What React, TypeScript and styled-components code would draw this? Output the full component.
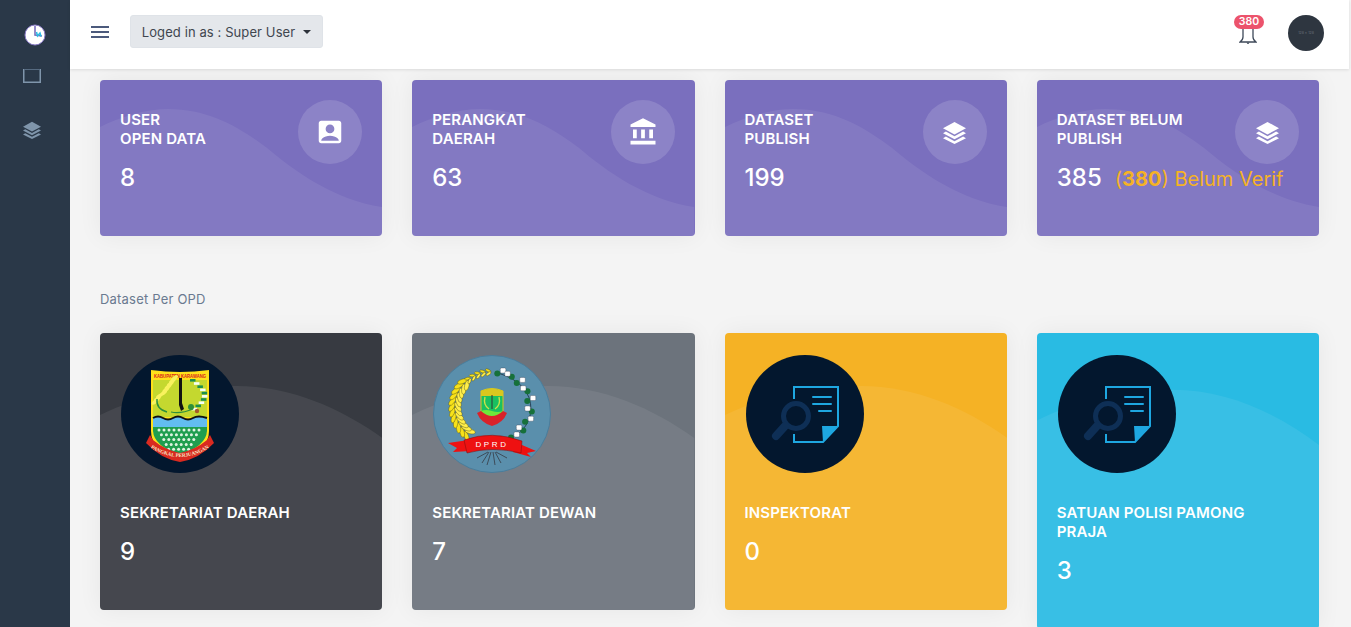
import styled, { createGlobalStyle } from "styled-components";
import { ReactNode } from "react";
import { MdAccountBox, MdAccountBalance } from "react-icons/md";

const GlobalStyle = createGlobalStyle`
  html, body {
    margin: 0;
    height: 100%;
    overflow: hidden;
    background: #f4f4f4;
  }
  body {
    font-family: "Inter", "Open Sans", sans-serif;
    color: #333;
  }
`;

const Shell = styled.div`
  display: flex;
  width: 1351px;
  height: 627px;
  overflow: hidden;
`;

const Sidebar = styled.aside`
  flex: 0 0 70px;
  background: #2a3848;
  display: flex;
  flex-direction: column;
  align-items: center;
`;

const SideLogo = styled.div`
  height: 69px;
  display: flex;
  align-items: center;
  justify-content: center;
`;

const SideNav = styled.nav`
  display: flex;
  flex-direction: column;
  align-items: center;
  gap: 38px;
  padding-right: 6px;
  color: #7f95ab;
`;

const Main = styled.main`
  flex: 1;
  min-width: 0;
  display: flex;
  flex-direction: column;
`;

const TopBar = styled.header`
  flex: 0 0 69px;
  margin-right: 2px;
  background: #fff;
  box-shadow: 0 1px 3px rgba(0, 0, 0, 0.1);
  display: flex;
  align-items: flex-start;
  padding: 15px 25px 0 21px;
  box-sizing: border-box;
  position: relative;
  z-index: 2;
`;

const MenuButton = styled.div`
  height: 33px;
  display: flex;
  align-items: center;
  margin-right: 21px;
`;

const UserButton = styled.div`
  width: 193px;
  height: 33px;
  box-sizing: border-box;
  background: #e4e7eb;
  border: 1px solid #dfe3e8;
  border-radius: 3px;
  display: flex;
  align-items: center;
  justify-content: center;
  gap: 6px;
  font-size: 13px;
  color: #40464f;
  letter-spacing: 0.1px;
`;

const Caret = styled.span`
  width: 0;
  height: 0;
  border-left: 4px solid transparent;
  border-right: 4px solid transparent;
  border-top: 4px solid #2d323a;
  margin-left: 2px;
`;

const Spacer = styled.div`
  flex: 1;
`;

const BellWrap = styled.div`
  position: relative;
  width: 30px;
  height: 36px;
  margin-right: 24px;
  display: flex;
  justify-content: center;
  padding: 13px 2px 0 0;
  box-sizing: border-box;
`;

const Badge = styled.span`
  position: absolute;
  top: 0;
  left: 0;
  width: 30px;
  height: 14px;
  border-radius: 8px;
  background: #ec536c;
  color: #fff;
  font-size: 10.5px;
  font-weight: 600;
  line-height: 14px;
  text-align: center;
`;

const Avatar = styled.div`
  width: 36px;
  height: 36px;
  border-radius: 50%;
  background: #2e3640;
  color: #6b727c;
  font-size: 3.5px;
  display: flex;
  align-items: center;
  justify-content: center;
`;

const Content = styled.div`
  padding: 11px 32px 0 30px;
`;

const CardGrid = styled.div`
  display: grid;
  grid-template-columns: repeat(4, 1fr);
  gap: 30px;
  align-items: start;
`;

const SectionLabel = styled.div`
  font-size: 13px;
  line-height: 16px;
  letter-spacing: 0.2px;
  color: #6a7a90;
  margin: 55px 0 26px;
`;

const Card = styled.div<{ $base: string }>`
  position: relative;
  overflow: hidden;
  background: ${(p) => p.$base};
  border-radius: 4px;
  box-shadow: 0 0 24px rgba(0, 0, 0, 0.06);
  color: #fff;
  padding: 30px 20px 44px;
`;

const OpdCard = styled(Card)`
  padding-top: 22px;
`;

const WaveSvg = styled.svg`
  position: absolute;
  inset: 0;
  width: 100%;
  height: 100%;
`;

const CardBody = styled.div`
  position: relative;
`;

const CardTitle = styled.div`
  font-size: 15px;
  line-height: 19px;
  font-weight: 600;
  letter-spacing: 0.15px;
  margin-bottom: 15px;
`;

const OpdTitle = styled(CardTitle)`
  padding-right: 30px;
`;

const CardValue = styled.div`
  font-size: 24px;
  height: 29px;
  line-height: 29px;
  font-weight: 500;
  white-space: nowrap;
`;

const PendingNote = styled.span`
  margin-left: 13px;
  font-size: 20px;
  line-height: 1;
  font-weight: 400;
  color: #f5b225;
  strong {
    font-weight: 700;
  }
`;

const IconCircle = styled.div`
  position: absolute;
  top: 20px;
  right: 20px;
  width: 64px;
  height: 64px;
  border-radius: 50%;
  background: rgba(255, 255, 255, 0.14);
  display: flex;
  align-items: center;
  justify-content: center;
`;

const LogoBox = styled.div`
  width: 118px;
  height: 118px;
  margin: 0 0 30px 1px;
  svg {
    display: block;
  }
`;

const PURPLE_WAVE = "M0,47 C20,37 45,29 68,29 C110,29 140,48 167,68 C195,92 235,120 282,127 L282,156 L0,156 Z";
const OPD_WAVE = "M0,82 C40,62 90,53 136,53 C190,53 240,75 282,105 L282,277 L0,277 Z";

const Wave = ({ d, h }: { d: string; h: number }) => (
  <WaveSvg viewBox={`0 0 282 ${h}`} preserveAspectRatio="none">
    <path d={d} fill="rgba(255,255,255,0.07)" />
  </WaveSvg>
);

const HamburgerIcon = () => (
  <svg width="18" height="12" viewBox="0 0 18 12" style={{ display: "block" }}>
    <path d="M0 1 H18 M0 6 H18 M0 11 H18" stroke="#4c5a7c" strokeWidth="2" />
  </svg>
);

const BellIcon = () => (
  <svg width="18" height="18" viewBox="0 0 18 18" style={{ display: "block" }}>
    <path d="M4 0 V9 Q4 12 1 14 H17 Q14 12 14 9 V0" fill="none" stroke="#3f4a5a" strokeWidth="1.3" />
    <path d="M7.5 14.5 Q9 17.5 10.5 14.5 Z" fill="#3f4a5a" />
  </svg>
);

const LayersIcon = ({ size = 23, color = "#fff" }: { size?: number; color?: string }) => (
  <svg width={size} height={size} viewBox="0 0 24 24">
    <path d="M12 1 L24 7.5 L12 14 L0 7.5 Z" fill={color} />
    <path d="M3 11 L12 16 L21 11 L24 12.8 L12 19 L0 12.8 Z" fill={color} />
    <path d="M3 16.3 L12 21 L21 16.3 L24 18 L12 24 L0 18 Z" fill={color} />
  </svg>
);

const PieLogo = () => (
  <svg width="24" height="24" viewBox="0 0 24 24">
    <circle cx="12" cy="12" r="10" fill="#fff" stroke="#8a7cc8" strokeWidth="1" />
    <path d="M12 3 L12 12 L19 13" fill="none" stroke="#7a6fbe" strokeWidth="1.6" />
    <path d="M13.5 9 L14.5 13 L17 10 L18 13.5" fill="none" stroke="#29bbe3" strokeWidth="1.5" />
  </svg>
);

const ClippedBoxIcon = () => (
  <svg width="18" height="14" viewBox="0 0 18 14" style={{ display: "block" }}>
    <path d="M0.75 0 V13.25 H17.25 V0" fill="none" stroke="#7f95ab" strokeWidth="1.5" />
    <path d="M1 0.5 H17" stroke="#566a80" strokeWidth="1" />
  </svg>
);

const KarawangLogo = () => {
  const dots = [];
  for (let row = 0; row < 5; row++) {
    for (let col = 0; col < 9 - row; col++) {
      dots.push(<circle key={`${row}-${col}`} cx={38 + row * 2.4 + col * 5} cy={75 + row * 4.8} r="1.5" fill="#dff3e2" />);
    }
  }
  const grains = [];
  for (let i = 0; i < 9; i++) {
    const cx = 36 + i * 2.2 - (i < 3 ? 2 : 0);
    const cy = 47 - i * 3;
    grains.push(<ellipse key={i} cx={cx} cy={cy} rx="4" ry="1.7" fill="#f8f25e" transform={`rotate(-35 ${cx} ${cy})`} />);
  }
  const leaves = [];
  for (let i = 0; i < 10; i++) {
    const y = 24 + i * 3.2;
    const x = 69 + Math.sin(i / 3) * 12;
    leaves.push(<rect key={i} x={x} y={y} width="5.5" height="2.6" fill={i % 2 ? "#f4fff6" : "#1b8f4f"} />);
  }
  return (
    <svg width="118" height="118" viewBox="0 0 118 118">
      <circle cx="59" cy="59" r="59" fill="#03172e" />
      <path d="M30 15 Q59 19 88 15 V76 Q88 96 59 105 Q30 96 30 76 Z" fill="#ffe11a" />
      <path d="M32 25 H86 V62 H32 Z" fill="#c4d82f" />
      <text
        fontFamily="Liberation Sans, sans-serif"
        fontSize="5"
        fontWeight="700"
        fill="#d8231f"
        x="33"
        y="22.5"
        textLength="52"
        lengthAdjust="spacingAndGlyphs"
      >
        KABUPATEN KARAWANG
      </text>
      <path d="M32 71 V76 Q33 91 59 100 Q85 91 86 76 V71 Z" fill="#1f9e4f" />
      {dots}
      <path d="M32 63 Q37 60 42 63 T52 63 T62 63 T72 63 T86 63 V72 H32 Z" fill="#62bdf0" />
      <path d="M32 63 Q37 60 42 63 T52 63 T62 63 T72 63 T86 63" fill="none" stroke="#111" strokeWidth="2" />
      {grains}
      <path d="M36 44 Q35 54 46 57" fill="none" stroke="#2e8f3a" strokeWidth="1.4" />
      <path d="M58 23 H61 V48 L63 54 L60 56 L58 50 Z" fill="#111" />
      {leaves}
      <circle cx="70" cy="52" r="3" fill="#2e8f3a" />
      <circle cx="76" cy="56" r="2.2" fill="#a35a2a" />
      <path d="M50 57 Q60 59 72 54" fill="none" stroke="#2e8f3a" strokeWidth="1.2" />
      <path d="M25 88 L29 80 L32 85 Q44 95 59 98 Q74 95 86 85 L89 80 L93 88 Q78 104 59 107 Q40 104 25 88 Z" fill="#d92a20" />
      <path id="kr-ribbon" d="M27 91 Q59 113 91 91" fill="none" />
      <text fontFamily="Liberation Serif, serif" fontSize="5.2" fontWeight="700" fill="#f6e9c8">
        <textPath href="#kr-ribbon" startOffset="50%" textAnchor="middle">
          PANGKAL PERJUANGAN
        </textPath>
      </text>
    </svg>
  );
};

const DprdLogo = () => {
  const wheat = [];
  for (let i = 0; i < 17; i++) {
    const deg = 130 + i * 8.4;
    const a = (deg * Math.PI) / 180;
    const small = i > 11;
    const rx = small ? 3 : 5.2;
    const ry = small ? 1.3 : 2.2;
    const spread = small ? 1.6 : 3;
    const ox = 59 + Math.cos(a) * (37 + spread);
    const oy = 52 + Math.sin(a) * (35 + spread);
    const ix = 59 + Math.cos(a) * (37 - spread);
    const iy = 52 + Math.sin(a) * (35 - spread);
    wheat.push(<ellipse key={`o${i}`} cx={ox} cy={oy} rx={rx} ry={ry} fill="#f7e21a" stroke="#4d4a10" strokeWidth="0.4" transform={`rotate(${deg + 90 + 30} ${ox} ${oy})`} />);
    wheat.push(<ellipse key={`i${i}`} cx={ix} cy={iy} rx={rx} ry={ry} fill="#ffef4a" stroke="#4d4a10" strokeWidth="0.4" transform={`rotate(${deg + 90 - 30} ${ix} ${iy})`} />);
  }
  const cotton = [];
  for (let i = 0; i < 10; i++) {
    const a = -1.4 + i * 0.3;
    const x = 60 + Math.cos(a) * 37;
    const y = 52 + Math.sin(a) * 35;
    cotton.push(<circle key={i} cx={x + (i % 2 ? 2 : -2)} cy={y + 1} r="3" fill="#16703a" />);
    cotton.push(<rect key={`c${i}`} x={x - (i % 2 ? 5 : -1)} y={y - 4.5} width="5.5" height="5" rx="1.2" fill="#fff" stroke="#223" strokeWidth="0.3" />);
  }
  return (
    <svg width="118" height="118" viewBox="0 0 118 118">
      <circle cx="59" cy="59" r="58.5" fill="#5a8fac" stroke="#4a7d9b" />
      {wheat}
      <path d="M65 18 Q98 28 98 55 Q97 70 84 80" fill="none" stroke="#123" strokeWidth="0.7" />
      {cotton}
      <path d="M48 36 Q59 31 70 36 V56 Q70 64 59 68 Q48 64 48 56 Z" fill="#19c060" stroke="#d9c71e" strokeWidth="1" />
      <path d="M48 36 Q59 31 70 36 V41 H48 Z" fill="#d9c71e" />
      <path d="M59 40 V54" stroke="#333" strokeWidth="1" />
      <path d="M52 42 Q50 50 56 54 M66 42 Q68 50 62 54" fill="none" stroke="#c9e24a" strokeWidth="1.4" />
      <path d="M48 56 Q53 54 59 56 T70 56 V58 Q66 65 59 68 Q52 65 48 58 Z" fill="#6ee83a" />
      <path d="M44 58 L48 56 Q59 66 70 56 L74 58 Q70 68 59 71 Q48 68 44 58 Z" fill="#d9222a" />
      <path d="M15 88 L36 85 L38 96 L20 97 L24 93 Z" fill="#ee1111" />
      <path d="M103 96 L82 87 L80 97 L98 102 L94 98 Z" fill="#ee1111" />
      <path d="M31 85 Q59 75 89 86 L88 98 Q59 91 34 98 Z" fill="#ee1111" stroke="#7a1010" strokeWidth="0.5" />
      <text x="59" y="92" fontFamily="Liberation Sans, sans-serif" fontSize="8" fill="#fff" letterSpacing="2.6" textAnchor="middle">
        DPRD
      </text>
      <path d="M55 97 L44 103 M56 97 L49 108 M58 97 L54 110 M60 97 L62 110 M62 97 L68 108 M63 97 L74 103" stroke="#3d4c5a" strokeWidth="1" fill="none" />
    </svg>
  );
};

const DocSearchLogo = () => (
  <svg width="118" height="118" viewBox="0 0 118 118">
    <circle cx="59" cy="59" r="59" fill="#03172e" />
    <path d="M48 44 V32 H92 V71 L77 87 H48 V79" fill="none" stroke="#1ea7e1" strokeWidth="2" />
    <path d="M92 71 L77 87 L76 71 Z" fill="#1ea7e1" />
    <path d="M67 42 H85 M67 49 H85 M73 56 H85" stroke="#1ea7e1" strokeWidth="2" strokeLinecap="round" />
    <circle cx="50" cy="61" r="12.5" fill="none" stroke="#0e2f56" strokeWidth="5" />
    <path d="M39 71 L30 81" stroke="#0e2f56" strokeWidth="8" strokeLinecap="round" />
  </svg>
);

type Stat = { title: ReactNode; value: ReactNode; icon: ReactNode };

const stats: Stat[] = [
  { title: <>USER<br />OPEN DATA</>, value: "8", icon: <MdAccountBox size={30} color="#fff" /> },
  { title: <>PERANGKAT<br />DAERAH</>, value: "63", icon: <MdAccountBalance size={30} color="#fff" /> },
  { title: <>DATASET<br />PUBLISH</>, value: "199", icon: <LayersIcon /> },
  {
    title: <>DATASET BELUM<br />PUBLISH</>,
    value: (
      <>
        385
        <PendingNote>
          (<strong>380</strong>) Belum Verif
        </PendingNote>
      </>
    ),
    icon: <LayersIcon />,
  },
];

const opds = [
  { name: "SEKRETARIAT DAERAH", value: "9", base: "#373a41", logo: <KarawangLogo /> },
  { name: "SEKRETARIAT DEWAN", value: "7", base: "#6c737c", logo: <DprdLogo /> },
  { name: "INSPEKTORAT", value: "0", base: "#f5b225", logo: <DocSearchLogo /> },
  { name: "SATUAN POLISI PAMONG PRAJA", value: "3", base: "#29bbe3", logo: <DocSearchLogo /> },
];

export default function App() {
  return (
    <Shell>
      <GlobalStyle />
      <Sidebar>
        <SideLogo>
          <PieLogo />
        </SideLogo>
        <SideNav>
          <ClippedBoxIcon />
          <LayersIcon size={18} color="#7f95ab" />
        </SideNav>
      </Sidebar>
      <Main>
        <TopBar>
          <MenuButton>
            <HamburgerIcon />
          </MenuButton>
          <UserButton>
            Loged in as : Super User
            <Caret />
          </UserButton>
          <Spacer />
          <BellWrap>
            <BellIcon />
            <Badge>380</Badge>
          </BellWrap>
          <Avatar>128 x 128</Avatar>
        </TopBar>
        <Content>
          <CardGrid>
            {stats.map((s, i) => (
              <Card key={i} $base="#7a6fbe">
                <Wave d={PURPLE_WAVE} h={156} />
                <CardBody>
                  <CardTitle>{s.title}</CardTitle>
                  <CardValue>{s.value}</CardValue>
                </CardBody>
                <IconCircle>{s.icon}</IconCircle>
              </Card>
            ))}
          </CardGrid>
          <SectionLabel>Dataset Per OPD</SectionLabel>
          <CardGrid>
            {opds.map((o) => (
              <OpdCard key={o.name} $base={o.base}>
                <Wave d={OPD_WAVE} h={277} />
                <CardBody>
                  <LogoBox>{o.logo}</LogoBox>
                  <OpdTitle>{o.name}</OpdTitle>
                  <CardValue>{o.value}</CardValue>
                </CardBody>
              </OpdCard>
            ))}
          </CardGrid>
        </Content>
      </Main>
    </Shell>
  );
}
